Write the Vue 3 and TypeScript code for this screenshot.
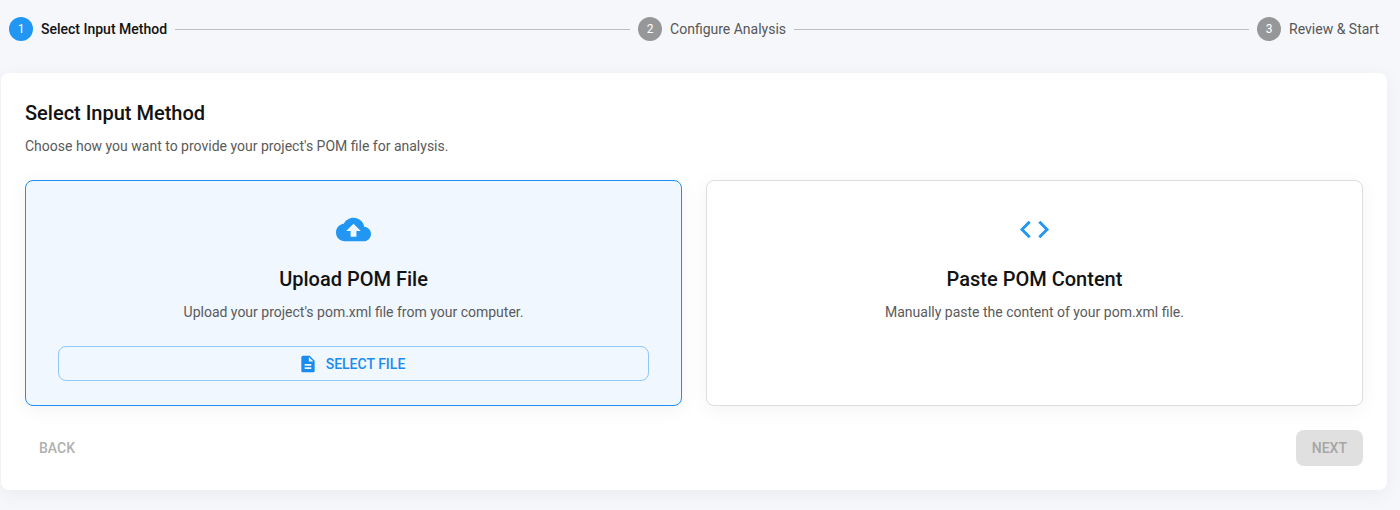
<script setup lang="ts">
import { ref } from 'vue'

interface Step {
  label: string
}

const steps: Step[] = [
  { label: 'Select Input Method' },
  { label: 'Configure Analysis' },
  { label: 'Review & Start' },
]
const activeStep = ref(0)
const method = ref<'upload' | 'paste'>('upload')
</script>

<template>
  <main class="page">
    <ol class="stepper">
      <template v-for="(step, i) in steps" :key="step.label">
        <li v-if="i > 0" class="connector" aria-hidden="true"></li>
        <li class="step" :class="{ active: i === activeStep }">
          <span class="step-number">{{ i + 1 }}</span>
          <span>{{ step.label }}</span>
        </li>
      </template>
    </ol>

    <section class="panel">
      <h1 class="title">Select Input Method</h1>
      <p class="text">Choose how you want to provide your project's POM file for analysis.</p>

      <div class="options">
        <article class="option" :class="{ selected: method === 'upload' }" @click="method = 'upload'">
          <svg class="option-icon" viewBox="0 0 24 24" aria-hidden="true">
            <path d="M19.35 10.04C18.67 6.59 15.64 4 12 4 9.11 4 6.6 5.64 5.35 8.04 2.34 8.36 0 10.91 0 14c0 3.31 2.69 6 6 6h13c2.76 0 5-2.24 5-5 0-2.64-2.05-4.78-4.65-4.96zM14 13v4h-4v-4H7l5-5 5 5h-3z" />
          </svg>
          <h2 class="title">Upload POM File</h2>
          <p class="text">Upload your project's pom.xml file from your computer.</p>
          <button type="button" class="button outlined">
            <svg class="button-icon" viewBox="0 0 24 24" aria-hidden="true">
              <path d="M14 2H6c-1.1 0-1.99.9-1.99 2L4 20c0 1.1.89 2 1.99 2H18c1.1 0 2-.9 2-2V8l-6-6zm2 16H8v-2h8v2zm0-4H8v-2h8v2zm-3-5V3.5L18.5 9H13z" />
            </svg>
            SELECT FILE
          </button>
        </article>

        <article class="option" :class="{ selected: method === 'paste' }" @click="method = 'paste'">
          <svg class="option-icon" viewBox="0 0 24 24" aria-hidden="true">
            <path d="M9.4 16.6L4.8 12l4.6-4.6L8 6l-6 6 6 6 1.4-1.4zm5.2 0l4.6-4.6-4.6-4.6L16 6l6 6-6 6-1.4-1.4z" />
          </svg>
          <h2 class="title">Paste POM Content</h2>
          <p class="text">Manually paste the content of your pom.xml file.</p>
        </article>
      </div>

      <div class="actions">
        <button type="button" class="button" disabled>BACK</button>
        <button type="button" class="button contained" disabled>NEXT</button>
      </div>
    </section>
  </main>
</template>

<style>
body {
  margin: 0;
  background: #f5f7fb;
}
</style>

<style scoped>
.page {
  padding: 17px 13px 20px 1px;
  font-family: Roboto, "Liberation Sans", sans-serif;
  font-size: 14px;
  line-height: 20px;
  color: #121212;
}
.stepper {
  display: flex;
  align-items: center;
  gap: 8px;
  margin: 0 0 32px;
  padding: 0 8px;
  list-style: none;
}
.step {
  display: flex;
  align-items: center;
  gap: 8px;
  color: #555658;
}
.step.active {
  color: #121212;
  font-weight: 500;
}
.step-number {
  display: flex;
  align-items: center;
  justify-content: center;
  width: 24px;
  height: 24px;
  border-radius: 50%;
  background: #969798;
  color: #fff;
  font-size: 12px;
  font-weight: 400;
}
.active .step-number {
  background: #2196f3;
}
.connector {
  flex: 1;
  height: 1px;
  background: #bdbdbd;
}
.panel {
  padding: 24px;
  border-radius: 8px;
  background: #fff;
  box-shadow: 0 4px 20px rgba(0, 0, 0, 0.05);
}
.title {
  margin: 0;
  font-size: 20px;
  line-height: 32px;
  font-weight: 500;
}
.text {
  margin: 7px 0 0;
  color: #5a5a5a;
}
.options {
  display: grid;
  grid-template-columns: 1fr 1fr;
  gap: 24px;
  margin-top: 24px;
}
.option {
  display: flex;
  flex-direction: column;
  align-items: center;
  padding: 31px 32px 24px;
  border: 1px solid #dedede;
  border-radius: 8px;
  background: #fff;
  box-shadow: 0 4px 20px rgba(0, 0, 0, 0.05);
  text-align: center;
  cursor: pointer;
}
.option.selected {
  border-color: #2090f0;
  background: #f0f7ff;
}
.option-icon {
  width: 35px;
  height: 35px;
  margin-bottom: 16px;
  fill: #2196f3;
}
.button {
  display: flex;
  align-items: center;
  justify-content: center;
  gap: 8px;
  height: 36px;
  padding: 0 14px;
  border: 0;
  border-radius: 8px;
  background: transparent;
  color: #1a8cf0;
  font-family: inherit;
  font-size: 14px;
  font-weight: 500;
}
.button:disabled {
  color: #b0b0b0;
}
.outlined {
  width: 100%;
  height: 35px;
  margin-top: 24px;
  border: 1px solid #90c8f9;
}
.button-icon {
  width: 20px;
  height: 20px;
  margin-left: -4px;
  fill: #1a8cf0;
}
.contained {
  padding: 0 16px;
  background: #e0e0e0;
}
.contained:disabled {
  color: #a6a6a6;
}
.actions {
  display: flex;
  justify-content: space-between;
  margin-top: 24px;
}
</style>
